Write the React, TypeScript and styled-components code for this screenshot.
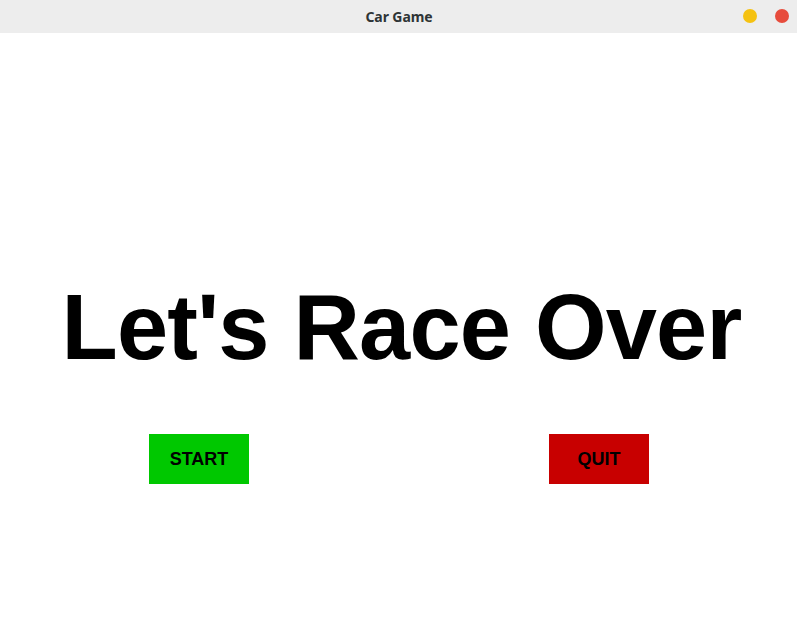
import React from "react";
import styled, { createGlobalStyle } from "styled-components";

const Global = createGlobalStyle`
  html, body { margin: 0; padding: 0; background: #ffffff; }
  body { font-family: "Liberation Sans", Arial, sans-serif; }
`;

const Window = styled.div`
  width: 797px;
  height: 631px;
  display: flex;
  flex-direction: column;
  background: #ffffff;
  overflow: hidden;
`;

const TitleBar = styled.div`
  position: relative;
  height: 33px;
  flex: none;
  background: #ededed;
  display: flex;
  align-items: center;
  justify-content: center;
`;

const Title = styled.span`
  font-family: "Noto Sans", "DejaVu Sans", sans-serif;
  font-weight: 700;
  font-size: 14px;
  color: #2e3436;
  letter-spacing: -0.1px;
  padding-left: 1px;
`;

const Controls = styled.div`
  position: absolute;
  right: 8px;
  top: 9px;
  display: flex;
  gap: 18px;
`;

const Dot = styled.span<{ $color: string }>`
  width: 14px;
  height: 14px;
  border-radius: 50%;
  background: ${(p) => p.$color};
`;

const Stage = styled.main`
  flex: 1;
  display: flex;
  flex-direction: column;
`;

const Heading = styled.h1`
  margin: 241px 0 0 0;
  padding-left: 6px;
  text-align: center;
  font-family: "Liberation Sans", Arial, sans-serif;
  font-weight: 700;
  font-size: 92px;
  line-height: 106px;
  letter-spacing: -0.8px;
  color: #000000;
`;

const ButtonRow = styled.div`
  display: flex;
  gap: 300px;
  margin: 54px 0 0 149px;
`;

const GameButton = styled.button<{ $bg: string }>`
  width: 100px;
  height: 50px;
  border: none;
  border-radius: 0;
  padding: 0;
  background: ${(p) => p.$bg};
  color: #000000;
  font-family: "Liberation Sans", Arial, sans-serif;
  font-weight: 700;
  font-size: 18px;
  cursor: pointer;
`;

export default function App() {
  return (
    <>
      <Global />
      <Window>
        <TitleBar>
          <Title>Car Game</Title>
          <Controls>
            <Dot $color="#f5c211" />
            <Dot $color="#e74c3c" />
          </Controls>
        </TitleBar>
        <Stage>
          <Heading>Let's Race Over</Heading>
          <ButtonRow>
            <GameButton $bg="#00c800">START</GameButton>
            <GameButton $bg="#c80000">QUIT</GameButton>
          </ButtonRow>
        </Stage>
      </Window>
    </>
  );
}
